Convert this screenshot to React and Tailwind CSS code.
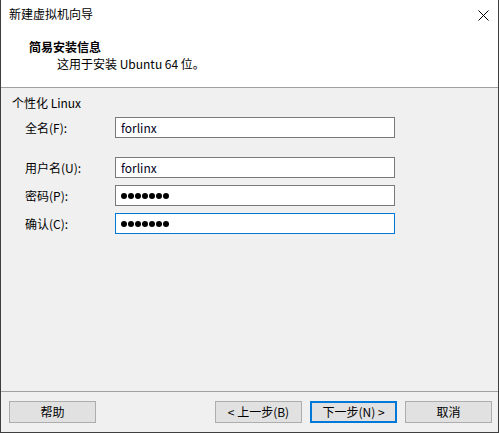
import React from "react";

const font = { fontFamily: '"Noto Sans CJK SC", "Noto Sans", sans-serif' };

function Field({ label, value, password, focused, className = "" }) {
  return (
    <div className={"flex items-center " + className}>
      <div className="w-[114px] shrink-0 pl-[24px] text-[12px] leading-[16px] text-black whitespace-nowrap">{label}</div>
      <div
        className={
          "w-[280px] h-[21px] shrink-0 bg-white border flex items-center pl-[5px] " +
          (focused ? "border-[#0078d7]" : "border-[#7a7a7a]")
        }
      >
        {password ? (
          <div className="flex items-center gap-[1px]">
            {Array.from({ length: 7 }).map((_, i) => (
              <span key={i} className="w-[6px] h-[6px] rounded-full bg-black inline-block" />
            ))}
          </div>
        ) : (
          <span className="text-[12px] leading-[16px] text-[#000020]">{value}</span>
        )}
      </div>
    </div>
  );
}

function Btn({ children, focused }) {
  return (
    <div
      className={
        "w-[87px] h-[22px] bg-[#e1e1e1] flex items-center justify-center text-[12px] leading-[16px] text-black " +
        (focused ? "border-2 border-[#0078d7]" : "border border-[#adadad]")
      }
    >
      {children}
    </div>
  );
}

export default function App() {
  return (
    <div
      style={font}
      className="w-[499px] h-[433px] flex flex-col bg-[#f0f0f0] border-l border-r border-b border-[#3f3f3f]"
    >
      {/* header */}
      <div className="h-[88px] bg-white border-b border-[#a0a0a0] flex flex-col">
        <div className="flex items-start justify-between pl-[8px] pr-[9px] pt-[6px]">
          <span className="text-[12px] leading-[16px] text-black">新建虚拟机向导</span>
          <svg width="11" height="11" viewBox="0 0 11 11" className="mt-[4px]">
            <path d="M0.5 0.5 L10.5 10.5 M10.5 0.5 L0.5 10.5" stroke="#000" strokeWidth="1" fill="none" />
          </svg>
        </div>
        <div className="pl-[28px] pt-[17px] text-[12px] leading-[16px] font-bold text-black">简易安装信息</div>
        <div className="pl-[56px] pt-[1px] text-[12px] leading-[16px] text-black">这用于安装 Ubuntu 64 位。</div>
      </div>

      {/* body */}
      <div className="flex-1 flex flex-col">
        <div className="pl-[11px] pt-[7px] text-[12px] leading-[16px] text-black">个性化 Linux</div>
        <Field label="全名(F):" value="forlinx" className="mt-[6px]" />
        <Field label="用户名(U):" value="forlinx" className="mt-[19px]" />
        <Field label="密码(P):" password className="mt-[7px]" />
        <Field label="确认(C):" password focused className="mt-[7px]" />
      </div>

      {/* footer */}
      <div className="border-t border-[#a0a0a0] h-[41px] flex items-start pt-[9px] pl-[8px] pr-[6px]">
        <Btn>帮助</Btn>
        <div className="flex-1" />
        <div className="flex gap-[8px]">
          <Btn>&lt; 上一步(B)</Btn>
          <Btn focused>下一步(N) &gt;</Btn>
          <Btn>取消</Btn>
        </div>
      </div>
    </div>
  );
}
